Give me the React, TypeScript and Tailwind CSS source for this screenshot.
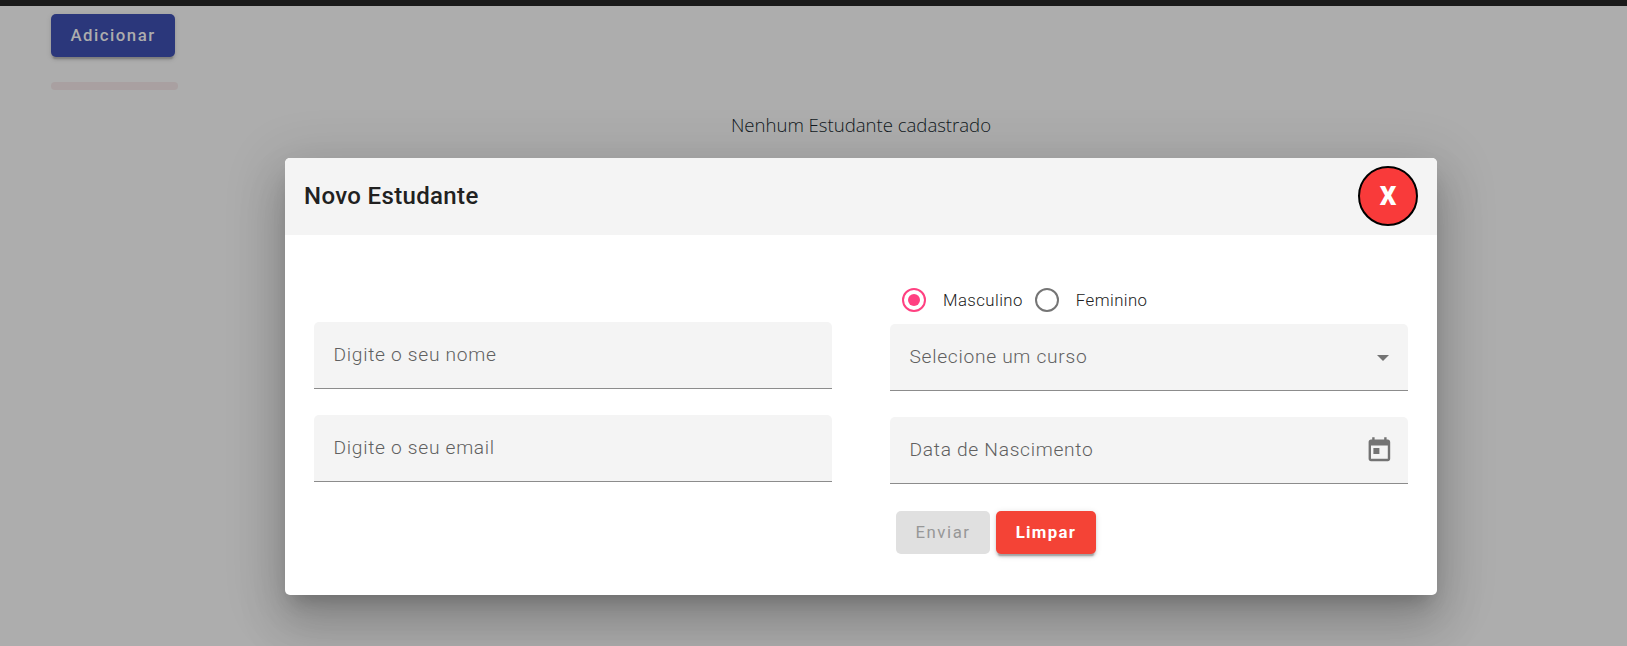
import { type ReactNode } from "react";

function Field({ label, children }: { label: string; children?: ReactNode }) {
  return (
    <div className="flex h-[67px] items-center justify-between rounded-t-[5px] border-b border-[#8c8c8c] bg-[#f4f4f4] pr-[16px] pl-[19.5px]">
      <span className="text-[19.2px] leading-6 font-[360] tracking-[0.7px] text-[#606060]">{label}</span>
      {children}
    </div>
  );
}

function Radio({ label, checked }: { label: string; checked?: boolean }) {
  return (
    <div className="flex items-center gap-[17px]">
      <svg width="24" height="24" viewBox="0 0 24 24" fill="none">
        <circle cx="12" cy="12" r="11" strokeWidth="2" stroke={checked ? "#ff4081" : "#757575"} />
        {checked && <circle cx="12" cy="12" r="6" fill="#ff4081" />}
      </svg>
      <span className="text-[16.8px] leading-6 font-[360] tracking-[0.42px] text-[#212121]">{label}</span>
    </div>
  );
}

export default function App() {
  return (
    <div className="relative h-[646px] overflow-hidden bg-[#adadad] font-['Roboto',sans-serif]">
      <div className="h-[6px] bg-[#1a1a1a]" />
      <main className="flex flex-col pt-[8px] pl-[51px]">
        <button className="h-[43px] w-[124px] rounded-[5px] bg-[#2b377b] text-[16.8px] font-medium tracking-[1.5px] text-[#adadad] shadow-[0_3.6px_1.2px_-2.4px_rgba(0,0,0,0.14),0_2.4px_2.4px_0_rgba(0,0,0,0.1),0_1.2px_6px_0_rgba(0,0,0,0.08)]">
          Adicionar
        </button>
        <div className="mt-[25px] h-[8px] w-[127px] rounded-[4px] bg-[#a9a0a1]" />
        <p className="mt-[22px] pr-[1px] pl-[45px] text-center font-['Open_Sans',sans-serif] text-[18.6px] leading-[26px] font-[360] tracking-[-0.02px] text-[#101820]">
          Nenhum Estudante cadastrado
        </p>
      </main>

      <div className="absolute inset-0 flex items-start pt-[158px] pl-[285px]">
        <section className="flex h-[437px] w-[1152px] flex-col overflow-clip rounded-[5px] bg-white shadow-[0_13.2px_18px_-8.4px_rgba(0,0,0,0.2),0_28.8px_45.6px_3.6px_rgba(0,0,0,0.14),0_10.8px_55.2px_9.6px_rgba(0,0,0,0.12)]">
          <header className="flex h-[77px] items-center justify-between bg-[#f4f4f4] px-[19px] pb-[1px]">
            <h2 className="text-[24px] leading-8 font-[460] tracking-[0.35px] text-[#212121]">Novo Estudante</h2>
            <button className="flex size-[60px] items-center justify-center rounded-full border-2 border-black bg-[#f93a3a] text-[26px] font-black text-white">
              X
            </button>
          </header>
          <div className="flex gap-[58px] px-[29px]">
            <div className="flex w-[518px] flex-col gap-[26px] pt-[87px]">
              <Field label="Digite o seu nome" />
              <Field label="Digite o seu email" />
            </div>
            <div className="flex w-[518px] flex-col pt-[53px]">
              <div className="flex gap-[12px] pl-[12px]">
                <Radio label="Masculino" checked />
                <Radio label="Feminino" />
              </div>
              <div className="mt-[12px] flex flex-col gap-[26px]">
                <Field label="Selecione um curso">
                  <svg className="mt-[2px] mr-[3px]" width="12" height="6" viewBox="0 0 12 6" fill="#737373">
                    <path d="M0 0h12L6 6z" />
                  </svg>
                </Field>
                <Field label="Data de Nascimento">
                  <svg width="28.8" height="28.8" viewBox="0 0 24 24" fill="#737373" className="-mr-[2px]">
                    <path d="M19 3h-1V1h-2v2H8V1H6v2H5c-1.11 0-1.99.9-1.99 2L3 19c0 1.1.89 2 2 2h14c1.1 0 2-.9 2-2V5c0-1.1-.9-2-2-2zm0 16H5V8h14v11zM7 10h5v5H7z" />
                  </svg>
                </Field>
              </div>
              <div className="mt-[27px] flex gap-[6px] pl-[6px]">
                <button className="h-[43px] w-[94px] rounded-[5px] bg-[#e0e0e0] text-[16.8px] font-[450] tracking-[1.55px] text-[#979797]">
                  Enviar
                </button>
                <button className="h-[43px] w-[100px] rounded-[5px] bg-[#f44336] text-[16.8px] font-bold tracking-[1.35px] text-white shadow-[0_3.6px_1.2px_-2.4px_rgba(0,0,0,0.2),0_2.4px_2.4px_0_rgba(0,0,0,0.14),0_1.2px_6px_0_rgba(0,0,0,0.12)]">
                  Limpar
                </button>
              </div>
            </div>
          </div>
        </section>
      </div>
    </div>
  );
}
